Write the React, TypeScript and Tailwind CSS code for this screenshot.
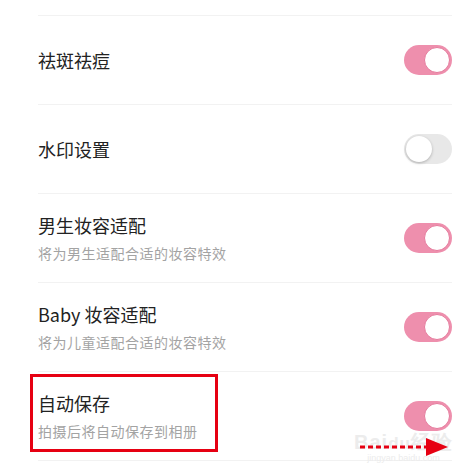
const rows = [
  { title: '祛斑祛痘', on: true },
  { title: '水印设置', on: false },
  { title: '男生妆容适配', desc: '将为男生适配合适的妆容特效', on: true },
  { title: 'Baby 妆容适配', desc: '将为儿童适配合适的妆容特效', on: true },
  { title: '自动保存', desc: '拍摄后将自动保存到相册', on: true, marked: true },
]

function Toggle({ on }: { on: boolean }) {
  return (
    <div
      className={`w-[48px] h-[30px] rounded-full p-[2px] flex items-center ${
        on ? 'bg-[#ee8fad] justify-end' : 'bg-[#e8e8e8] justify-start'
      }`}
    >
      <div
        className={`w-[26px] h-[26px] rounded-full bg-white ${
          on ? 'border border-[#e57a9c]' : 'shadow-[0_1px_3px_rgba(0,0,0,0.25)]'
        }`}
      />
    </div>
  )
}

export default function App() {
  return (
    <div
      className="relative w-[473px] h-[476px] bg-white overflow-hidden"
      style={{ fontFamily: '"Noto Sans CJK SC", "Noto Sans", sans-serif' }}
    >
      <div className="h-[15px]" />
      <div className="ml-[38px] mr-[21px] border-t border-[#f2f2f2]">
        {rows.map((r) => (
          <div
            key={r.title}
            className="relative h-[89px] flex items-center justify-between border-b border-[#f2f2f2]"
          >
            <div className="flex flex-col">
              <span className="text-[18px] leading-[24px] text-[#222222]">{r.title}</span>
              {r.desc && (
                <span className="mt-[6px] text-[14px] leading-[20px] tracking-[0.5px] text-[#a3a3a3]">
                  {r.desc}
                </span>
              )}
            </div>
            <Toggle on={r.on} />
            {r.marked && (
              <div className="absolute left-[-8px] top-[2px] w-[188px] h-[78px] border-[3px] border-[#e60012]" />
            )}
          </div>
        ))}
      </div>

      {/* watermark */}
      <div className="absolute left-[354px] top-[432px] flex flex-col items-center text-[#ececec] leading-none pointer-events-none">
        <span className="text-[20px] font-bold tracking-[1px]" style={{ fontFamily: '"Liberation Sans", sans-serif' }}>
          Bai<span className="text-[17px]">du</span>经验
        </span>
        <span className="text-[9px] mt-[2px]" style={{ fontFamily: '"Liberation Sans", sans-serif' }}>
          jingyan.baidu.com
        </span>
      </div>
      <svg className="absolute left-[358px] top-[436px]" width="92" height="22" viewBox="0 0 92 22">
        <line x1="2" y1="11" x2="70" y2="11" stroke="#e60012" strokeWidth="3" strokeDasharray="5 3" />
        <polygon points="68,2 90,11 68,20" fill="#e60012" />
      </svg>
    </div>
  )
}
